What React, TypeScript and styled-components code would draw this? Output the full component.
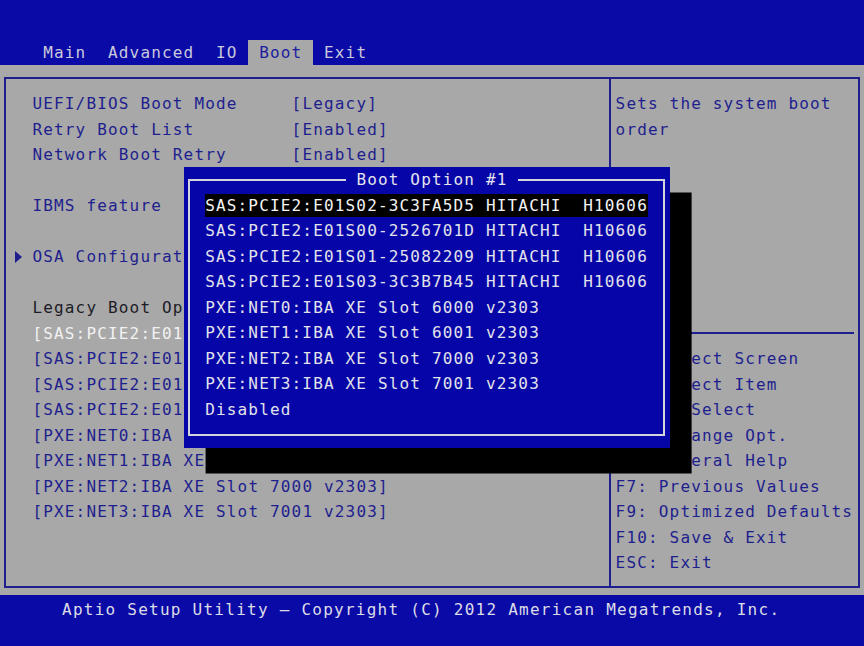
import React from "react";
import styled, { createGlobalStyle } from "styled-components";

const CW = 10.8; // character cell width
const RH = 25.5; // character cell height

const BLUE = "#0a0aa6";
const POP_BLUE = "#0505a8";
const GRAY = "#a8a8a8";
const NAVY = "#1e1e8e";

const GlobalStyle = createGlobalStyle`
  html, body { margin: 0; padding: 0; background: ${GRAY}; }
  #root { width: 864px; height: 646px; }
`;

const Screen = styled.div`
  width: 864px;
  height: 646px;
  display: flex;
  flex-direction: column;
  overflow: hidden;
  font-family: "DejaVu Sans Mono", "Liberation Mono", monospace;
  font-size: 16px;
  letter-spacing: 1.167px;
  white-space: pre;
`;

const TopBar = styled.div`
  height: 65px;
  flex: none;
  background: ${BLUE};
  display: flex;
  align-items: flex-end;
  padding-left: ${CW * 3}px;
  box-sizing: border-box;
`;

const Tab = styled.div<{ $active?: boolean }>`
  height: 25px;
  line-height: 26px;
  padding: 0 ${CW}px;
  color: ${(p) => (p.$active ? "#1c1ca0" : "#c9c9dc")};
  background: ${(p) => (p.$active ? GRAY : "transparent")};
`;

const Main = styled.div`
  flex: 1;
  background: ${GRAY};
  padding: 12px 4px 7px 4px;
  box-sizing: border-box;
  display: flex;
`;

const Box = styled.div`
  flex: 1;
  position: relative;
  display: flex;
  border: 2px solid ${NAVY};
`;

const LeftPane = styled.div`
  width: 603.2px;
  flex: none;
  box-sizing: border-box;
  padding: 12px 0 0 ${CW * 3 - 6}px;
  overflow: hidden;
`;

const RightPane = styled.div`
  flex: 1;
  border-left: 2px solid ${NAVY};
  padding: 12px 0 0 4.4px;
  overflow: hidden;
`;

const Line = styled.div<{ $tone?: "blue" | "dark" | "white" }>`
  height: ${RH}px;
  line-height: ${RH}px;
  display: flex;
  align-items: center;
  color: ${(p) =>
    p.$tone === "dark" ? "#1c1c26" : p.$tone === "white" ? "#f2f2f2" : NAVY};
`;

const Label = styled.span`
  width: ${CW * 24}px;
  flex: none;
`;

/* submenu pointer: a filled right-pointing triangle in column 1 */
const Marker = styled.span`
  flex: none;
  width: 0;
  height: 0;
  margin-left: ${-CW * 2 + 4}px;
  margin-right: ${CW * 2 - 4 - 7}px;
  border-top: 6px solid transparent;
  border-bottom: 6px solid transparent;
  border-left: 7px solid ${NAVY};
`;

const Separator = styled.div`
  height: ${RH}px;
  display: flex;
  align-items: center;
  margin-left: -4.4px;
  margin-right: 4px;
  &::after {
    content: "";
    flex: 1;
    height: 2px;
    background: ${NAVY};
  }
`;

const Popup = styled.div`
  position: absolute;
  left: ${CW * 17 - 6}px;
  top: ${RH * 3 + 12 - 0.5}px;
  width: ${CW * 45}px;
  height: ${RH * 11}px;
  background: ${POP_BLUE};
  box-shadow: ${CW * 2}px ${RH}px 0 0 #000;
  padding: 11.75px 4.4px;
  box-sizing: border-box;
  z-index: 2;
`;

const Frame = styled.div`
  position: relative;
  height: 100%;
  box-sizing: border-box;
  border: 2px solid #d4d4dc;
  padding: 11.75px 0 0 15.2px;
`;

const Title = styled.div`
  position: absolute;
  top: ${-1 - RH / 2}px;
  left: ${CW * 32 - (CW * 17 + 6.4)}px;
  height: ${RH}px;
  line-height: ${RH}px;
  padding: 0 ${CW}px;
  background: ${POP_BLUE};
  color: #e4e4ec;
`;

const Item = styled.div`
  height: ${RH}px;
  display: flex;
  align-items: center;
  color: #e2e2ea;
`;

const ItemText = styled.span<{ $selected?: boolean }>`
  display: inline-block;
  height: 23px;
  line-height: 23px;
  background: ${(p) => (p.$selected ? "#000" : "transparent")};
  color: ${(p) => (p.$selected ? "#f4f4f4" : "#e2e2ea")};
`;

const BottomBar = styled.div`
  height: 51px;
  flex: none;
  background: ${BLUE};
  color: #dcdce6;
  padding: 2px 0 0 62px;
  box-sizing: border-box;
  line-height: ${RH}px;
  letter-spacing: 1.25px;
`;

const tabs = ["Main", "Advanced", "IO", "Boot", "Exit"];

const bootOptions = [
  "SAS:PCIE2:E01S02-3C3FA5D5 HITACHI  H10606",
  "SAS:PCIE2:E01S00-2526701D HITACHI  H10606",
  "SAS:PCIE2:E01S01-25082209 HITACHI  H10606",
  "SAS:PCIE2:E01S03-3C3B7B45 HITACHI  H10606",
  "PXE:NET0:IBA XE Slot 6000 v2303",
  "PXE:NET1:IBA XE Slot 6001 v2303",
  "PXE:NET2:IBA XE Slot 7000 v2303",
  "PXE:NET3:IBA XE Slot 7001 v2303",
];

/* What remains visible of the priority list around the pop-up window */
const legacyList = [
  "[SAS:PCIE2:E01",
  "[SAS:PCIE2:E01",
  "[SAS:PCIE2:E01",
  "[SAS:PCIE2:E01",
  "[PXE:NET0:IBA",
  "[PXE:NET1:IBA XE",
  "[PXE:NET2:IBA XE Slot 7000 v2303]",
  "[PXE:NET3:IBA XE Slot 7001 v2303]",
];

const helpKeys = [
  "\u2192\u2190: Select Screen",
  "\u2191\u2193: Select Item",
  "Enter: Select",
  "+/-: Change Opt.",
  "F1: General Help",
  "F7: Previous Values",
  "F9: Optimized Defaults",
  "F10: Save & Exit",
  "ESC: Exit",
];

export default function App() {
  return (
    <Screen>
      <GlobalStyle />
      <TopBar>
        {tabs.map((t) => (
          <Tab key={t} $active={t === "Boot"}>
            {t}
          </Tab>
        ))}
      </TopBar>
      <Main>
        <Box>
          <LeftPane>
            <Line>
              <Label>UEFI/BIOS Boot Mode</Label>
              <span>[Legacy]</span>
            </Line>
            <Line>
              <Label>Retry Boot List</Label>
              <span>[Enabled]</span>
            </Line>
            <Line>
              <Label>Network Boot Retry</Label>
              <span>[Enabled]</span>
            </Line>
            <Line />
            <Line>
              <Label>IBMS feature</Label>
            </Line>
            <Line />
            <Line>
              <Marker />
              <span>OSA Configurat</span>
            </Line>
            <Line />
            <Line $tone="dark">Legacy Boot Op</Line>
            {legacyList.map((o, i) => (
              <Line key={i} $tone={i === 0 ? "white" : "blue"}>
                {o}
              </Line>
            ))}
          </LeftPane>
          <RightPane>
            <Line>Sets the system boot</Line>
            <Line>order</Line>
            <Line />
            <Line />
            <Line />
            <Line />
            <Line />
            <Line />
            <Line />
            <Separator />
            {helpKeys.map((k) => (
              <Line key={k}>{k}</Line>
            ))}
          </RightPane>
          <Popup>
            <Frame>
              <Title>Boot Option #1</Title>
              {[...bootOptions, "Disabled"].map((o, i) => (
                <Item key={o}>
                  <ItemText $selected={i === 0}>{o}</ItemText>
                </Item>
              ))}
            </Frame>
          </Popup>
        </Box>
      </Main>
      <BottomBar>Aptio Setup Utility – Copyright (C) 2012 American Megatrends, Inc.</BottomBar>
    </Screen>
  );
}
